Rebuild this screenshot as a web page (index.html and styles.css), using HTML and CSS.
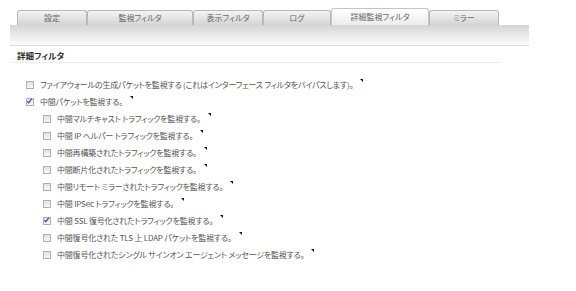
FILE: index.html
```html
<!DOCTYPE html>
<html lang="ja">
<head>
  <meta charset="UTF-8" />
  <title>詳細監視フィルタ</title>
  <link rel="stylesheet" href="styles.css">
</head>
<body>
  <div class="tabs">
    <div class="tab w70">設定</div>
    <div class="tab w106">監視フィルタ</div>
    <div class="tab w70">表示フィルタ</div>
    <div class="tab w68">ログ</div>
    <div class="tab active w98">詳細監視フィルタ</div>
    <div class="tab w70">ミラー</div>
  </div>
  <div class="toolbar"></div>

  <div class="section">
    <h3 class="section-title">詳細フィルタ</h3>

    <ul class="options">
      <li class="opt"><span class="box"></span>ファイアウォールの生成パケットを監視する (これはインターフェース フィルタをバイパスします)。<i class="tip"></i></li>
      <li class="opt"><span class="box checked"><svg viewBox="0 0 8 8"><path d="M1.5 4.2 L3.2 6 L6.6 1.4"/></svg></span>中間パケットを監視する。<i class="tip"></i></li>
      <li class="opt sub"><span class="box"></span>中間マルチキャスト トラフィックを監視する。<i class="tip"></i></li>
      <li class="opt sub"><span class="box"></span>中間 IP ヘルパー トラフィックを監視する。<i class="tip"></i></li>
      <li class="opt sub"><span class="box"></span>中間再構築されたトラフィックを監視する。<i class="tip"></i></li>
      <li class="opt sub"><span class="box"></span>中間断片化されたトラフィックを監視する。<i class="tip"></i></li>
      <li class="opt sub"><span class="box"></span>中間リモート ミラーされたトラフィックを監視する。<i class="tip"></i></li>
      <li class="opt sub"><span class="box"></span>中間 IPSec トラフィックを監視する。<i class="tip"></i></li>
      <li class="opt sub"><span class="box checked"><svg viewBox="0 0 8 8"><path d="M1.5 4.2 L3.2 6 L6.6 1.4"/></svg></span>中間 SSL 復号化されたトラフィックを監視する。<i class="tip"></i></li>
      <li class="opt sub"><span class="box"></span>中間復号化された TLS 上 LDAP パケットを監視する。<i class="tip"></i></li>
      <li class="opt sub"><span class="box"></span>中間復号化されたシングル サインオン エージェント メッセージを監視する。<i class="tip"></i></li>
    </ul>
  </div>
</body>
</html>
```

FILE: styles.css
```css
* {
  box-sizing: border-box;
  margin: 0;
  padding: 0;
}

body {
  background: #fff;
  font-family: "Noto Sans CJK JP", "Noto Sans", sans-serif;
  font-feature-settings: "palt";
  color: #444;
  width: 576px;
  height: 291px;
  overflow: hidden;
}

/* Tabs */
.tabs {
  display: flex;
  align-items: flex-end;
  height: 25px;
  padding-left: 17px;
}

.tab {
  height: 15px;
  border: 1px solid #b8b8b8;
  border-bottom: none;
  border-radius: 3px 3px 0 0;
  background: linear-gradient(#f4f4f4, #d4d4d4);
  font-size: 8px;
  line-height: 14px;
  text-align: center;
  color: #666;
}

.tab.active {
  height: 17px;
  line-height: 16px;
  background: linear-gradient(#ffffff, #ececec);
  border-color: #c4c4c4;
}

.w70 { width: 70px; }
.w106 { width: 106px; }
.w68 { width: 68px; }
.w98 { width: 98px; }

.toolbar {
  margin-left: 10px;
  width: 519px;
  height: 21px;
  background: linear-gradient(#d4d4d4, #ececec 55%, #fbfbfb);
  border-bottom: 1px solid #dcdcdc;
}

/* Section */
.section {
  margin-left: 10px;
  width: 490px;
}

.section-title {
  font-size: 8.5px;
  font-weight: bold;
  color: #333;
  height: 17px;
  line-height: 17px;
  padding: 1px 0 0 7px;
  border-bottom: 1px solid #ececec;
}

.options {
  list-style: none;
  padding-top: 13px;
}

.opt {
  display: flex;
  align-items: center;
  height: 17px;
  padding-left: 16px;
  font-size: 8px;
  letter-spacing: -0.2px;
  color: #555;
  white-space: nowrap;
}

.opt.sub {
  padding-left: 33px;
}

.box {
  width: 8px;
  height: 8px;
  border: 1px solid #b0b0b0;
  background: linear-gradient(#e2e2e2, #f8f8f8);
  margin-right: 6px;
  flex: none;
  display: flex;
}

.box svg {
  width: 8px;
  height: 8px;
  margin: -2px 0 0 -1px;
  fill: none;
  stroke: #3b4fb0;
  stroke-width: 1.4;
}

.tip {
  width: 0;
  height: 0;
  border-top: 3px solid #111;
  border-left: 3px solid transparent;
  margin: 0 0 8px 7px;
}
```
